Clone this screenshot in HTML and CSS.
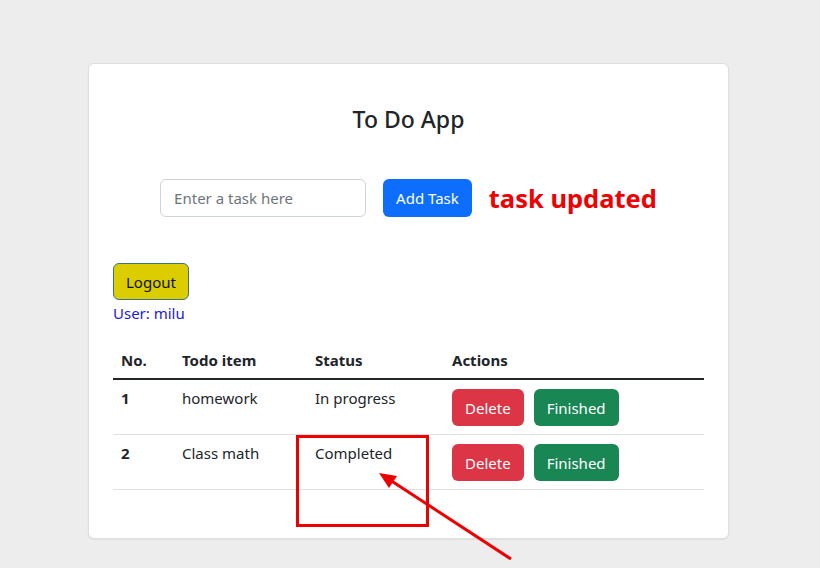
FILE: index.html
```html
<!DOCTYPE html>
<html>
<head>
<meta charset="utf-8">
<link rel="stylesheet" href="styles.css">
</head>
<body>
<div class="card">
  <h3 class="title">To Do App</h3>
  <div class="form-row">
    <input class="task-input" type="text" placeholder="Enter a task here">
    <button class="btn btn-primary">Add Task</button>
    <span class="message">task updated</span>
  </div>
  <div class="user-block">
    <button class="btn btn-logout">Logout</button>
    <div class="user">User: milu</div>
  </div>
  <table class="todo-table">
    <thead>
      <tr>
        <th class="col-no">No.</th>
        <th class="col-item">Todo item</th>
        <th class="col-status">Status</th>
        <th class="col-actions">Actions</th>
      </tr>
    </thead>
    <tbody>
      <tr>
        <td class="num">1</td>
        <td>homework</td>
        <td>In progress</td>
        <td class="action-cell"><div class="actions"><button class="btn btn-danger">Delete</button><button class="btn btn-success">Finished</button></div></td>
      </tr>
      <tr>
        <td class="num">2</td>
        <td>Class math</td>
        <td>Completed</td>
        <td class="action-cell"><div class="actions"><button class="btn btn-danger">Delete</button><button class="btn btn-success">Finished</button></div></td>
      </tr>
    </tbody>
  </table>
</div>
<svg class="annotation" width="820" height="568" viewBox="0 0 820 568">
  <rect x="297.5" y="436.5" width="130" height="89" fill="none" stroke="#ee0000" stroke-width="3"/>
  <line x1="511" y1="559" x2="390" y2="480" stroke="#ee0000" stroke-width="3"/>
  <polygon points="379,473 397,476 389,488" fill="#ee0000"/>
</svg>
</body>
</html>
```

FILE: styles.css
```css
html, body {
  margin: 0;
  padding: 0;
}
body {
  background: #ededed;
  font-family: "Noto Sans", "Open Sans", sans-serif;
  font-size: 15px;
  line-height: 24px;
  color: #212529;
  width: 820px;
  height: 568px;
  overflow: hidden;
  position: relative;
}
.card {
  margin: 63px 0 0 88px;
  width: 641px;
  height: 476px;
  box-sizing: border-box;
  background: #fff;
  border: 1px solid #dedede;
  border-radius: 6px;
  box-shadow: 0 1px 2px rgba(0,0,0,0.06);
  padding: 0 24px;
}
.title {
  margin: 41px 0 0;
  text-align: center;
  font-size: 23px;
  line-height: 29px;
  font-weight: 500;
  color: #212529;
}
.form-row {
  margin-top: 45px;
  display: flex;
  justify-content: center;
  align-items: center;
  gap: 17px;
  height: 38px;
}
.task-input {
  width: 206px;
  height: 38px;
  box-sizing: border-box;
  border: 1px solid #ced4da;
  border-radius: 6px;
  padding: 6px 13px;
  font-family: inherit;
  font-size: 15px;
  color: #212529;
  outline: none;
}
.task-input::placeholder {
  color: #6c757d;
}
.btn {
  font-family: inherit;
  font-size: 15px;
  line-height: 24px;
  border: 1px solid transparent;
  border-radius: 6px;
  padding: 6px 12px;
  cursor: pointer;
}
.btn-primary {
  background: #0d6efd;
  color: #fff;
  height: 38px;
}
.message {
  color: #f00000;
  font-weight: 700;
  font-size: 25.5px;
  line-height: 34px;
}
.user-block {
  margin-top: 46px;
}
.btn-logout {
  background: #dbcd00;
  border-color: #3b7385;
  color: #111;
  height: 37px;
  padding: 5px 12px;
}
.user {
  margin-top: 1px;
  color: #1d1ad6;
}
.todo-table {
  margin-top: 15px;
  width: 591px;
  border-collapse: collapse;
}
.todo-table th {
  text-align: left;
  font-weight: 700;
  padding: 8px 8px 6px;
  border-bottom: 2px solid #212529;
}
.todo-table td {
  padding: 6px 8px 8px;
  vertical-align: top;
  border-bottom: 1px solid #dee2e6;
}
.todo-table td.action-cell {
  padding: 9px 8px 8px;
}
.todo-table td.num {
  font-weight: 700;
}
.col-no { width: 45px; }
.col-item { width: 117px; }
.col-status { width: 121px; }
.actions {
  display: flex;
  gap: 10px;
}
.btn-danger {
  background: #dc3545;
  color: #fff;
  height: 37px;
}
.btn-success {
  background: #198754;
  color: #fff;
  height: 37px;
}
.annotation {
  position: absolute;
  left: 0;
  top: 0;
  pointer-events: none;
}
```
